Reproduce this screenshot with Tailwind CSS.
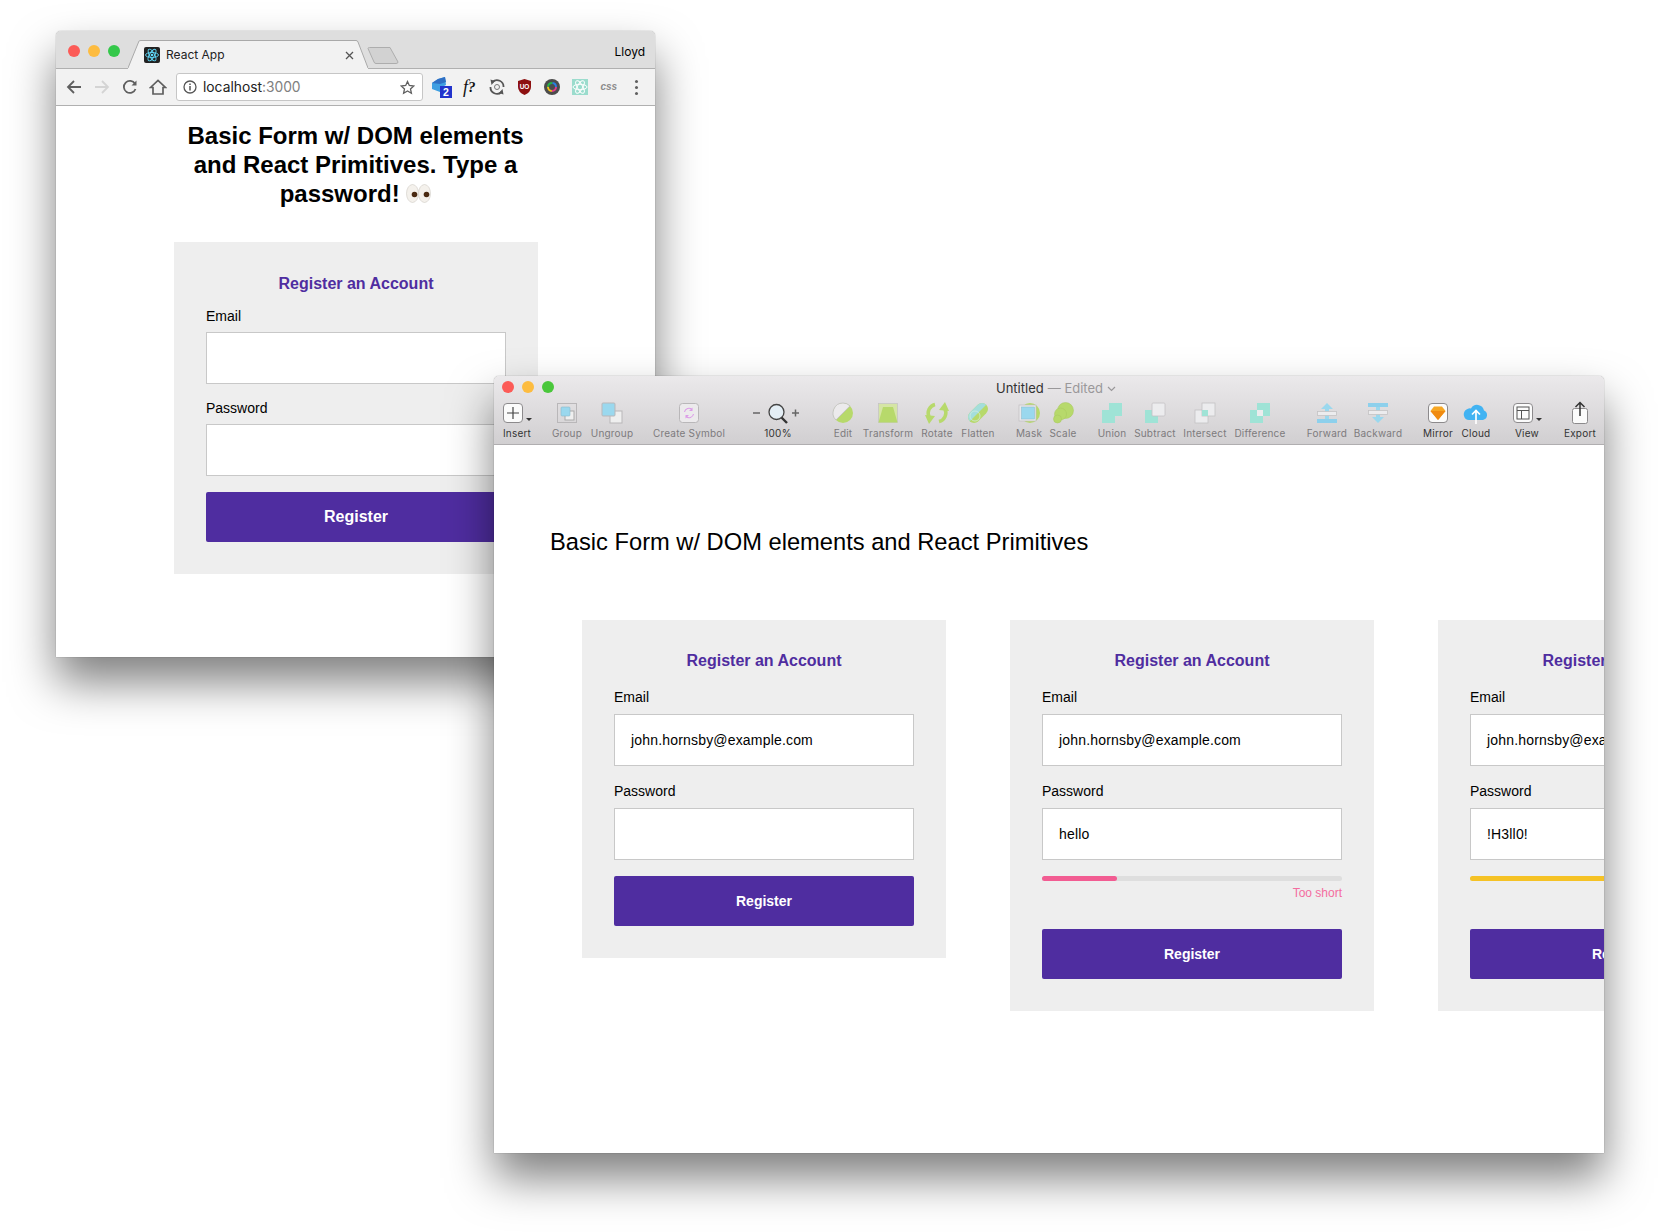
<!DOCTYPE html>
<html lang="en">
<head>
<meta charset="UTF-8">
<title>Basic Form</title>
<script src="https://cdn.jsdelivr.net/npm/@tailwindcss/browser@4"></script>
</head>
<body class="bg-white">
<div class="relative w-[1660px] h-[1232px] overflow-hidden bg-white font-['Liberation_Sans',sans-serif] text-black">

  <!-- browser window -->
  <div class="absolute left-[56px] top-[31px] w-[599px] h-[626px] bg-white rounded-t-[5px] overflow-hidden shadow-[0_25px_45px_rgba(0,0,0,0.5),0_0_1px_rgba(0,0,0,0.6)]">
    <div class="flex items-end h-[37px] bg-[#dedede]">
      <div class="flex items-center gap-2 w-[72px] h-full pl-3 pt-[3px]">
        <span class="w-3 h-3 rounded-full bg-[#fc5b57]"></span>
        <span class="w-3 h-3 rounded-full bg-[#fdbc40]"></span>
        <span class="w-3 h-3 rounded-full bg-[#34c84a]"></span>
      </div>
      <div class="relative flex items-center w-[240px] h-[29px] -mb-px pl-4 pt-px">
        <svg class="absolute left-0 top-0" width="240" height="29" viewBox="0 0 240 29"><path d="M0 28 L11 1 Q11.5 .5 13 .5 H228 Q229.500 .5 230 2 L240 28 V29 H0 Z" fill="#f2f2f2"/><path d="M0 28 L11 1 Q11.5 .5 13 .5 H228 Q229.500 .5 230 2 L240 28" fill="none" stroke="#a9a9a9"/></svg>
        <svg class="relative" width="16" height="16" viewBox="0 0 16 16"><rect width="16" height="16" rx="2" fill="#222"/><g fill="none" stroke="#61dafb" stroke-width=".9"><ellipse cx="8" cy="8" rx="6.500" ry="2.500"/><ellipse cx="8" cy="8" rx="6.500" ry="2.500" transform="rotate(60 8 8)"/><ellipse cx="8" cy="8" rx="6.500" ry="2.500" transform="rotate(120 8 8)"/></g><circle cx="8" cy="8" r="1.300" fill="#61dafb"/></svg>
        <span class="relative ml-[6px] text-[12px] leading-none font-['Inter',sans-serif] text-[#222]">React App</span>
        <svg class="absolute left-[217px] top-[11px]" width="9" height="9" viewBox="0 0 9 9"><path d="M1 1 L8 8 M8 1 L1 8" stroke="#555" stroke-width="1.300"/></svg>
      </div>
      <svg class="-ml-[1px] mb-[4px]" width="32" height="17" viewBox="0 0 32 17"><path d="M1 1.500 Q1 .5 2.500 .5 H23 L31 15 Q31 16.500 29 16.500 H9 Q7.500 16.500 7 15 Z" fill="#d2d2d2" stroke="#adadad"/></svg>
      <span class="ml-auto mr-[10px] mb-[9px] text-[12px] leading-[14px] font-['Inter',sans-serif]">Lloyd</span>
    </div>
    <div class="flex items-center h-[38px] pl-1 bg-[#f2f2f2] border-y border-[#b0b0b0]">
      <div class="flex items-center justify-center w-[28px]"><svg width="16" height="16" viewBox="0 0 16 16"><path d="M15 8 H2 M8 2 L2 8 L8 14" fill="none" stroke="#5f5f5f" stroke-width="1.800"/></svg></div>
      <div class="flex items-center justify-center w-[28px]"><svg width="16" height="16" viewBox="0 0 16 16"><path d="M1 8 H14 M8 2 L14 8 L8 14" fill="none" stroke="#d4d4d4" stroke-width="1.800"/></svg></div>
      <div class="flex items-center justify-center w-[28px]"><svg width="16" height="16" viewBox="0 0 16 16"><path d="M13.500 10 A6 6 0 1 1 13 4.800" fill="none" stroke="#5f5f5f" stroke-width="1.800"/><path d="M14.500 1.500 V6.500 H9.500 Z" fill="#5f5f5f"/></svg></div>
      <div class="flex items-center justify-center w-[28px]"><svg width="18" height="16" viewBox="0 0 18 16"><path d="M1.500 8.500 L9 1.500 L16.500 8.500 H14 V15 H4 V8.500 Z" fill="none" stroke="#5f5f5f" stroke-width="1.700"/></svg></div>
      <div class="flex items-center w-[247px] h-[28px] ml-1 pl-[6px] pr-[7px] bg-white border border-[#c6c6c6] rounded-[3px]">
        <svg width="14" height="14" viewBox="0 0 14 14"><circle cx="7" cy="7" r="6" fill="none" stroke="#555" stroke-width="1.300"/><path d="M7 6 V10.500 M7 3.500 V5" stroke="#555" stroke-width="1.500"/></svg>
        <span class="ml-[6px] mt-px text-[13.800px] leading-none font-['Inter',sans-serif] text-[#222]">localhost<span class="text-[#808080]">:3000</span></span>
        <svg class="ml-auto" width="15" height="15" viewBox="0 0 15 15"><path d="M7.500 1.500 L9.300 5.500 L13.800 6 L10.500 8.900 L11.400 13.300 L7.500 11 L3.600 13.300 L4.500 8.900 L1.200 6 L5.700 5.500 Z" fill="none" stroke="#5f5f5f" stroke-width="1.300"/></svg>
      </div>
      <div class="flex items-center ml-[6px]">
        <div class="flex items-center justify-center w-[27.5px] h-[28px]"><svg width="21" height="21" viewBox="0 0 21 21"><path d="M0 6 L6 2 L13 0 L14 8 L8 11 V15 L0 12 Z" fill="#3f9fe2"/><path d="M6 2 L13 0 L14 5 L8 7 L0 6 Z" fill="#2f6fc4"/><rect x="8" y="9" width="12" height="12" fill="#2233cc"/><text x="14" y="19" text-anchor="middle" font-size="10.500" font-weight="700" fill="#fff" font-family="Liberation Sans">2</text></svg></div>
        <div class="flex items-center justify-center w-[27.5px] h-[28px] -ml-px font-['Liberation_Serif',serif] text-[18px] leading-none text-[#111]"><i>f</i><span class="text-[15px] font-bold italic">?</span></div>
        <div class="flex items-center justify-center w-[27.5px] h-[28px]"><svg width="16" height="16" viewBox="0 0 16 16"><path d="M3.500 3 A6.500 6.500 0 0 1 14.500 8 M12.500 13 A6.500 6.500 0 0 1 1.500 8" fill="none" stroke="#555" stroke-width="1.800"/><path d="M1.500 .5 L6 2 L2.500 6 Z M14.500 15.500 L10 14 L13.500 10 Z" fill="#555"/><circle cx="8" cy="8" r="2.500" fill="none" stroke="#777"/></svg></div>
        <div class="flex items-center justify-center w-[27.5px] h-[28px]"><svg width="15" height="16" viewBox="0 0 15 16"><path d="M7.500 0 L14 2 V8 Q14 13 7.500 16 Q1 13 1 8 V2 Z" fill="#8d1010"/><text x="7.500" y="9.500" text-anchor="middle" font-size="6.500" font-weight="700" fill="#fff" font-family="Liberation Sans">UO</text></svg></div>
        <div class="flex items-center justify-center w-[27.5px] h-[28px]"><svg width="16" height="16" viewBox="0 0 16 16"><circle cx="8" cy="8" r="8" fill="#4c4c4c"/><circle cx="8" cy="8" r="4" fill="none" stroke="#e23c8a" stroke-width="2" stroke-dasharray="6.300 18.800"/><circle cx="8" cy="8" r="4" fill="none" stroke="#f2c21a" stroke-width="2" stroke-dasharray="6.300 18.800" stroke-dashoffset="-6.300"/><circle cx="8" cy="8" r="4" fill="none" stroke="#25b34a" stroke-width="2" stroke-dasharray="6.300 18.800" stroke-dashoffset="-12.600"/><circle cx="8" cy="8" r="4" fill="none" stroke="#2a7de1" stroke-width="2" stroke-dasharray="6.300 18.800" stroke-dashoffset="-18.900"/></svg></div>
        <div class="flex items-center justify-center w-[27.5px] h-[28px] ml-px"><svg width="16" height="16" viewBox="0 0 16 16"><rect width="16" height="16" fill="#9bdccd"/><g fill="none" stroke="#fff" stroke-width="1"><ellipse cx="8" cy="8" rx="7" ry="2.700"/><ellipse cx="8" cy="8" rx="7" ry="2.700" transform="rotate(60 8 8)"/><ellipse cx="8" cy="8" rx="7" ry="2.700" transform="rotate(120 8 8)"/></g></svg></div>
        <div class="flex items-center justify-center w-[27.5px] h-[28px] ml-px italic font-bold text-[10px] leading-none text-[#8a8a8a]">css</div>
        <div class="flex flex-col items-center justify-center gap-[3px] w-[27.5px] h-[28px]">
          <span class="w-[3px] h-[3px] rounded-full bg-[#5f5f5f]"></span><span class="w-[3px] h-[3px] rounded-full bg-[#5f5f5f]"></span><span class="w-[3px] h-[3px] rounded-full bg-[#5f5f5f]"></span>
        </div>
      </div>
    </div>
    <h1 class="mt-[15px] text-center text-[24px] leading-[29px] font-bold">Basic Form w/ DOM elements<br>and React Primitives. Type a<br>password! <svg class="inline-block align-[-1px]" width="25" height="19" viewBox="0 0 25 19"><ellipse cx="6.500" cy="9.500" rx="6" ry="9" fill="#f4f1ec" stroke="#cfcac2" stroke-width=".6"/><ellipse cx="18.500" cy="9.500" rx="6" ry="9" fill="#f4f1ec" stroke="#cfcac2" stroke-width=".6"/><circle cx="8.500" cy="10.500" r="2.800" fill="#4a2a12"/><circle cx="20.500" cy="10.500" r="2.800" fill="#4a2a12"/></svg></h1>
    <div class="w-[364px] h-[332px] mt-[34px] ml-[118px] px-8 pt-[32px] bg-[#eeeeee]">
      <h2 class="h-5 text-center text-[16px] leading-5 font-bold text-[#4f2da0]">Register an Account</h2>
      <label class="block h-4 mt-[14px] mb-2 text-[14px] leading-4">Email</label>
      <div class="h-[52px] bg-white border border-[#c8c8c8]"></div>
      <label class="block h-4 mt-4 mb-2 text-[14px] leading-4">Password</label>
      <div class="h-[52px] bg-white border border-[#c8c8c8]"></div>
      <button class="block w-full h-[50px] mt-4 rounded-[2px] bg-[#4f2da0] text-white text-[16px] font-bold">Register</button>
    </div>
  </div>

  <!-- sketch window -->
  <div class="absolute left-[494px] top-[376px] w-[1110px] h-[777px] bg-white rounded-t-[5px] overflow-hidden shadow-[0_25px_45px_rgba(0,0,0,0.5),0_0_1px_rgba(0,0,0,0.6)] font-['Inter',sans-serif]">
    <div class="h-[69px] bg-gradient-to-b from-[#ebe9eb] to-[#d1cfd1] border-b border-[#b0aeb0]">
      <div class="relative flex items-center justify-center h-[25px] pl-[14px] text-[13px] leading-none">
        <div class="absolute left-[8px] top-[5px] flex gap-2">
          <span class="w-3 h-3 rounded-full bg-[#fc5b57]"></span>
          <span class="w-3 h-3 rounded-full bg-[#fdbc40]"></span>
          <span class="w-3 h-3 rounded-full bg-[#4ac73b]"></span>
        </div>
        <span class="text-[#333]">Untitled</span><span class="ml-1 text-[#9a989a]">— Edited</span>
        <svg class="ml-1" width="9" height="6" viewBox="0 0 9 6"><path d="M1 1 L4.500 4.500 L8 1" fill="none" stroke="#9a989a" stroke-width="1.200"/></svg>
      </div>
      <div class="flex text-[10px] leading-3 tracking-[0.2px] text-[#7d7b7d]">

        <div class="flex flex-col items-center w-[38px] ml-[4px] text-[#333]"><svg width="30" height="24" viewBox="0 0 30 24"><rect x="1.500" y="2.500" width="19" height="19" rx="3.500" fill="#fbfbfb" stroke="#8c8a8c"/><path d="M11 6 V18 M5 12 H17" stroke="#444" stroke-width="1.200"/><path d="M24 17 H30 L27 20 Z" fill="#333"/></svg><span class="mt-[2px]">Insert</span></div>

        <div class="flex flex-col items-center w-[36px] ml-[13px]"><svg width="24" height="24" viewBox="0 0 24 24"><rect x="2.500" y="2.500" width="19" height="19" fill="none" stroke="#b9b7b9"/><rect x="10" y="10" width="9" height="9" fill="#efefef" stroke="#aaa"/><rect x="6" y="6" width="9" height="9" rx="1" fill="#9ad8ee" stroke="#8cb9c9" stroke-width=".6"/></svg><span class="mt-[2px]">Group</span></div>

        <div class="flex flex-col items-center w-[52px] ml-[1px]"><svg width="24" height="24" viewBox="0 0 24 24"><rect x="10" y="10" width="12" height="12" fill="#efefef" stroke="#b9b7b9"/><rect x="2" y="2" width="13" height="13" rx="1" fill="#9ad8ee" stroke="#b9b7b9"/></svg><span class="mt-[2px]">Ungroup</span></div>

        <div class="flex flex-col items-center w-[78px] ml-[12px]"><svg width="24" height="24" viewBox="0 0 24 24"><rect x="2.500" y="2.500" width="19" height="19" rx="3" fill="#eceaec" stroke="#b9b7b9"/><path d="M7.500 11 A4.500 4.500 0 0 1 15 8.500 M16.500 13 A4.500 4.500 0 0 1 9 15.500" fill="none" stroke="#dc9ce8" stroke-width="1.100"/><path d="M15.500 6.500 V10 H12 Z M8.500 17.500 V14 H12 Z" fill="#dc9ce8"/></svg><span class="mt-[2px]">Create Symbol</span></div>

        <div class="flex flex-col items-center w-[60px] ml-[20px] text-[#333]"><svg width="56" height="24" viewBox="0 0 56 24"><path d="M3 12 H10 M42 12 H49 M45.500 8.500 V15.500" stroke="#666" stroke-width="1.500"/><path d="M31 16 L37 22" stroke="#333" stroke-width="2.400"/><circle cx="26.500" cy="11" r="7.500" fill="#e4eef5" stroke="#444" stroke-width="1.300"/></svg><span class="mt-[2px]">100%</span></div>

        <div class="flex flex-col items-center w-[36px] ml-[17px]"><svg width="24" height="24" viewBox="0 0 24 24"><circle cx="12" cy="12" r="10" fill="#b7d96b"/><path d="M12 2 A10 10 0 0 0 4.900 19 L19 4.900 A10 10 0 0 0 12 2" fill="#eceaec" stroke="#bcbabc" stroke-width=".7"/></svg><span class="mt-[2px]">Edit</span></div>

        <div class="flex flex-col items-center w-[52px] ml-[1px]"><svg width="24" height="24" viewBox="0 0 24 24"><rect x="2.500" y="2.500" width="19" height="19" fill="#d5e5a5" stroke="#c4c2c4" stroke-width=".7"/><path d="M7 6 H17 L21.500 21.500 H2.500 Z" fill="#b7d96b"/></svg><span class="mt-[2px]">Transform</span></div>

        <div class="flex flex-col items-center w-[44px] ml-[1px]"><svg width="26" height="24" viewBox="0 0 26 24"><path d="M11 3.500 A9 9 0 0 0 5 16 M15 20.500 A9 9 0 0 0 21 8" fill="none" stroke="#b7d96b" stroke-width="3.500"/><path d="M1 14 L11 15 L5 23 Z M25 10 L15 9 L21 1 Z" fill="#b7d96b"/></svg><span class="mt-[2px]">Rotate</span></div>

        <div class="flex flex-col items-center w-[36px] ml-[1px]"><svg width="24" height="24" viewBox="0 0 24 24"><path d="M8 16 L16 8" stroke="#b7d96b" stroke-width="12" stroke-linecap="round"/><path d="M3.760 20.240 A6 6 0 0 1 3.760 11.760 L11.760 3.760 A6 6 0 0 1 20.240 3.760 Z" fill="#a4dedb"/><circle cx="9" cy="15" r="5" fill="none" stroke="#d5ece2" stroke-width=".7"/></svg><span class="mt-[2px]">Flatten</span></div>

        <div class="flex flex-col items-center w-[36px] ml-[15px]"><svg width="24" height="24" viewBox="0 0 24 24"><circle cx="13" cy="12" r="10" fill="#b7d96b"/><rect x="2" y="4" width="17" height="16" fill="#e8e8ea" stroke="#c0bec0" stroke-width=".7"/><rect x="4.500" y="6" width="13" height="12" fill="#9ad8ee" stroke="#88b8cc" stroke-width=".5"/></svg><span class="mt-[2px]">Mask</span></div>

        <div class="flex flex-col items-center w-[30px] ml-[1px]"><svg width="24" height="24" viewBox="0 0 24 24"><circle cx="14.500" cy="9.500" r="8" fill="#b7d96b" stroke="#a6c75e" stroke-width=".5"/><circle cx="9.500" cy="13" r="6" fill="#b7d96b" stroke="#a6c75e" stroke-width=".5"/><circle cx="6.500" cy="18" r="4" fill="#b7d96b" stroke="#a6c75e" stroke-width=".5"/></svg><span class="mt-[2px]">Scale</span></div>

        <div class="flex flex-col items-center w-[36px] ml-[16px]"><svg width="24" height="24" viewBox="0 0 24 24"><path d="M9 2 H22 V15 H15 V22 H2 V9 H9 Z" fill="#9fe3d6"/></svg><span class="mt-[2px]">Union</span></div>

        <div class="flex flex-col items-center w-[48px] ml-[1px]"><svg width="24" height="24" viewBox="0 0 24 24"><rect x="2" y="9" width="13" height="13" fill="#9fe3d6"/><rect x="9" y="2" width="13" height="13" rx="1" fill="#ececee" stroke="#c4c2c4" stroke-width=".8"/></svg><span class="mt-[2px]">Subtract</span></div>

        <div class="flex flex-col items-center w-[50px] ml-[1px]"><svg width="24" height="24" viewBox="0 0 24 24"><rect x="2" y="9" width="13" height="13" fill="#ececee" stroke="#c4c2c4" stroke-width=".8"/><rect x="9" y="2" width="13" height="13" fill="#ececee" stroke="#c4c2c4" stroke-width=".8"/><rect x="9" y="9" width="6" height="6" fill="#9fe3d6"/></svg><span class="mt-[2px]">Intersect</span></div>

        <div class="flex flex-col items-center w-[58px] ml-[1px]"><svg width="24" height="24" viewBox="0 0 24 24"><rect x="2" y="9" width="13" height="13" fill="#9fe3d6"/><rect x="9" y="2" width="13" height="13" fill="#9fe3d6"/><rect x="9" y="9" width="6" height="6" fill="#ececee"/></svg><span class="mt-[2px]">Difference</span></div>

        <div class="flex flex-col items-center w-[44px] ml-[16px]"><svg width="24" height="24" viewBox="0 0 24 24"><path d="M12 2 L18 8 H14 V18 H10 V8 H6 Z" fill="#9ad8ee"/><rect x="2.500" y="10.500" width="19" height="4" fill="#ececee" stroke="#c4c2c4" stroke-width=".8"/><rect x="2" y="18" width="20" height="4" fill="#8dd0ec"/></svg><span class="mt-[2px]">Forward</span></div>

        <div class="flex flex-col items-center w-[56px] ml-[1px]"><svg width="24" height="24" viewBox="0 0 24 24"><rect x="2" y="2" width="20" height="4" fill="#8dd0ec"/><path d="M12 22 L18 16 H14 V6 H10 V16 H6 Z" fill="#9ad8ee"/><rect x="2.500" y="9.500" width="19" height="4" fill="#ececee" stroke="#c4c2c4" stroke-width=".8"/></svg><span class="mt-[2px]">Backward</span></div>

        <div class="flex flex-col items-center w-[40px] ml-[12px] text-[#333]"><svg width="24" height="24" viewBox="0 0 24 24"><rect x="2.500" y="2.500" width="19" height="19" rx="3.500" fill="#fbfbfb" stroke="#8c8a8c"/><path d="M8 5.500 H16 L19.500 10 L12 19 L4.500 10 Z" fill="#f6a623"/><path d="M4.500 10 H19.500 L12 19 Z" fill="#f08a10"/></svg><span class="mt-[2px]">Mirror</span></div>

        <div class="flex flex-col items-center w-[34px] ml-[1px] text-[#333]"><svg width="26" height="24" viewBox="0 0 26 24"><path d="M6 19 H20 A5 5 0 0 0 21 9.500 A7 7 0 0 0 8 7.500 A6 6 0 0 0 1 15 Q2 19 6 19 Z" fill="#42b3f2"/><path d="M13 23 V10 M9 13.500 L13 9.500 L17 13.500" fill="none" stroke="#fff" stroke-width="1.700"/></svg><span class="mt-[2px]">Cloud</span></div>

        <div class="flex flex-col items-center w-[40px] ml-[14px] text-[#333]"><svg width="30" height="24" viewBox="0 0 30 24"><rect x="1.500" y="2.500" width="19" height="19" rx="3.500" fill="#fbfbfb" stroke="#8c8a8c"/><rect x="5" y="6" width="12" height="12" fill="none" stroke="#555"/><path d="M5 9.500 H17 M9.500 9.500 V18" stroke="#555"/><path d="M24 17 H30 L27 20 Z" fill="#333"/></svg><span class="mt-[2px]">View</span></div>

        <div class="flex flex-col items-center w-[48px] ml-[9px] text-[#333]"><svg width="24" height="24" viewBox="0 0 24 24"><rect x="4.500" y="7.500" width="15" height="15" rx="2" fill="#fbfbfb" stroke="#8c8a8c"/><path d="M12 15 V1.500 M7.500 6 L12 1.500 L16.500 6" fill="none" stroke="#333" stroke-width="1.500"/></svg><span class="mt-[2px]">Export</span></div>
      </div>
    </div>

    <h1 class="mt-[83px] ml-[56px] text-[23.700px] leading-[28px] font-['Liberation_Sans',sans-serif]">Basic Form w/ DOM elements and React Primitives</h1>

    <div class="flex items-start gap-16 mt-[64px] ml-[88px] font-['Liberation_Sans',sans-serif]">
      <div class="shrink-0 w-[364px] h-[338px] px-8 pt-[31px] bg-[#eeeeee]">
        <h2 class="h-5 text-center text-[16px] leading-5 font-bold text-[#4f2da0]">Register an Account</h2>
        <label class="block h-4 mt-[18px] mb-[9px] text-[14px] leading-4">Email</label>
        <div class="flex items-center h-[52px] px-4 bg-white border border-[#c8c8c8] text-[14px] tracking-[0.18px]">john.hornsby@example.com</div>
        <label class="block h-4 mt-[17px] mb-[9px] text-[14px] leading-4">Password</label>
        <div class="h-[52px] bg-white border border-[#c8c8c8]"></div>
        <button class="block w-full h-[50px] mt-4 rounded-[2px] bg-[#4f2da0] text-white text-[14px] font-bold">Register</button>
      </div>
      <div class="shrink-0 w-[364px] h-[391px] px-8 pt-[31px] bg-[#eeeeee]">
        <h2 class="h-5 text-center text-[16px] leading-5 font-bold text-[#4f2da0]">Register an Account</h2>
        <label class="block h-4 mt-[18px] mb-[9px] text-[14px] leading-4">Email</label>
        <div class="flex items-center h-[52px] px-4 bg-white border border-[#c8c8c8] text-[14px] tracking-[0.18px]">john.hornsby@example.com</div>
        <label class="block h-4 mt-[17px] mb-[9px] text-[14px] leading-4">Password</label>
        <div class="flex items-center h-[52px] px-4 bg-white border border-[#c8c8c8] text-[14px] tracking-[0.18px]">hello</div>
        <div class="h-[5px] mt-4 rounded-full bg-[#dedede]"><div class="w-1/4 h-full rounded-full bg-[#f25c92]"></div></div>
        <p class="mt-[5px] text-right text-[12px] leading-[14px] text-[#f46d9f]">Too short</p>
        <button class="block w-full h-[50px] mt-[29px] rounded-[2px] bg-[#4f2da0] text-white text-[14px] font-bold">Register</button>
      </div>
      <div class="shrink-0 w-[364px] h-[391px] px-8 pt-[31px] bg-[#eeeeee]">
        <h2 class="h-5 text-center text-[16px] leading-5 font-bold text-[#4f2da0]">Register an Account</h2>
        <label class="block h-4 mt-[18px] mb-[9px] text-[14px] leading-4">Email</label>
        <div class="flex items-center h-[52px] px-4 bg-white border border-[#c8c8c8] text-[14px] tracking-[0.18px]">john.hornsby@example.com</div>
        <label class="block h-4 mt-[17px] mb-[9px] text-[14px] leading-4">Password</label>
        <div class="flex items-center h-[52px] px-4 bg-white border border-[#c8c8c8] text-[14px] tracking-[0.18px]">!H3ll0!</div>
        <div class="h-[5px] mt-4 rounded-full bg-[#dedede]"><div class="w-3/4 h-full rounded-full bg-[#f5c225]"></div></div>
        <button class="block w-full h-[50px] mt-[48px] rounded-[2px] bg-[#4f2da0] text-white text-[14px] font-bold">Register</button>
      </div>
    </div>
  </div>
</div>
</body>
</html>
